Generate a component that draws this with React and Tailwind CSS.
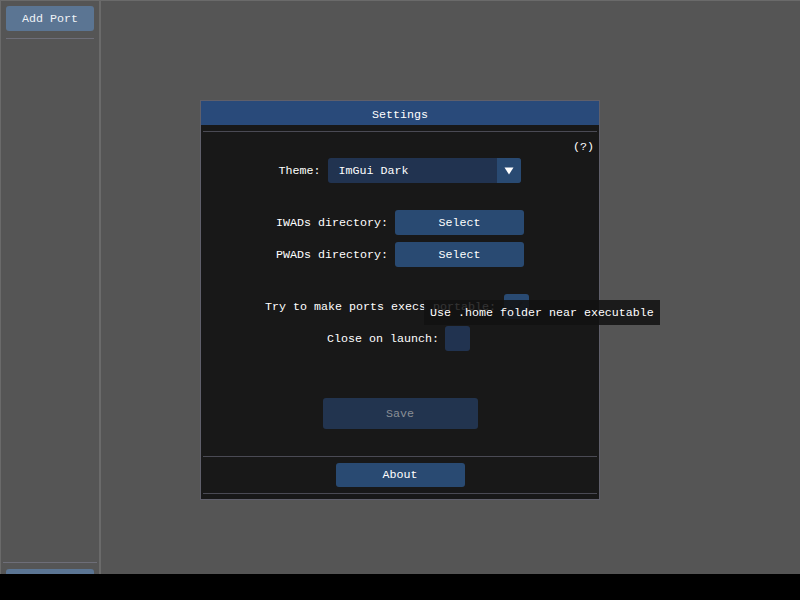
import React from "react";

function Row({ label, children, extra = "" }) {
  return (
    <div className={`flex shrink-0 items-center justify-center ${extra}`}>
      <span className="pt-[2px] leading-[13px] whitespace-pre">{label}</span>
      {children}
    </div>
  );
}

export default function App() {
  return (
    <div className="relative w-[800px] h-[600px] overflow-hidden bg-black text-white font-['Liberation_Mono','DejaVu_Sans_Mono',monospace] text-[11.67px]">
      <div className="flex h-[574px] overflow-hidden border-t border-[#6a6a6a] bg-[#555555]">
        <aside className="flex w-[101px] shrink-0 flex-col border-l border-r-2 border-[#6a6a6a]">
          <div className="mx-[5px] mt-[5px] flex h-[25px] w-[88px] shrink-0 items-center justify-center rounded-[3px] bg-[#5b7593] pt-[2px] text-[#eef2f6]">
            Add Port
          </div>
          <div className="mx-[5px] mt-[7px] h-px w-[88px] shrink-0 bg-[#6e6e78]" />
          <div className="h-[523px] shrink-0" />
          <div className="mx-[2px] h-px shrink-0 bg-[#6e6e78]" />
          <div className="mx-[5px] mt-[6px] h-[25px] w-[88px] shrink-0 rounded-[3px] bg-[#5b7593]" />
        </aside>
        <main className="flex-1" />
      </div>

      {/* Settings modal */}
      <div className="absolute left-[200px] top-[100px] flex h-[400px] w-[400px] flex-col border border-[#5f5f6a] bg-[#181818]">
        <div className="flex h-[24px] shrink-0 items-center justify-center bg-[#294a7a] pt-[5px]">
          Settings
        </div>
        <div className="mx-[2px] mt-[6px] h-px shrink-0 bg-[#4a4a54]" />
        <div className="mt-[9px] flex h-[13px] shrink-0 justify-end pr-[5px] leading-[13px]">(?)</div>

        <Row label="Theme:" extra="mt-[4px] h-[25px]">
          <div className="ml-[8px] flex h-[25px] w-[193px] overflow-hidden rounded-[3px] bg-[#213350]">
            <span className="flex flex-1 items-center pl-[10px] pt-[2px]">ImGui Dark</span>
            <span className="flex w-[24px] items-center justify-center bg-[#294a72]">
              <svg width="10" height="8" viewBox="0 0 10 8">
                <polygon points="0.5,0.5 9.5,0.5 5,7.5" fill="#ffffff" />
              </svg>
            </span>
          </div>
        </Row>

        <Row label="IWADs directory:" extra="mt-[27px] h-[25px]">
          <div className="ml-[7px] flex h-[25px] w-[129px] items-center justify-center rounded-[3px] bg-[#294a72] pt-[2px]">
            Select
          </div>
        </Row>
        <Row label="PWADs directory:" extra="mt-[7px] h-[25px]">
          <div className="ml-[7px] flex h-[25px] w-[129px] items-center justify-center rounded-[3px] bg-[#294a72] pt-[2px]">
            Select
          </div>
        </Row>

        <Row label="Try to make ports execs portable:" extra="mt-[27px] h-[25px] pr-[6px]">
          <div className="ml-[8px] flex h-[25px] w-[25px] items-center justify-center rounded-[3px] bg-[#294a72]">
            <svg width="16" height="14" viewBox="0 0 16 14">
              <polyline points="2,7 6,11 14,2" fill="none" stroke="#1d3354" strokeWidth="2.5" />
            </svg>
          </div>
        </Row>
        <Row label="Close on launch:" extra="mt-[7px] h-[25px] pr-[3px]">
          <div className="ml-[6px] h-[25px] w-[25px] rounded-[3px] bg-[#213350]" />
        </Row>

        <div className="mt-[47px] flex shrink-0 justify-center">
          <div className="flex h-[31px] w-[155px] items-center justify-center rounded-[3px] bg-[#22344f] pt-[2px] text-[#8a8f96]">
            Save
          </div>
        </div>

        <div className="mx-[2px] mt-[27px] h-px shrink-0 bg-[#4a4a54]" />
        <div className="mt-[6px] flex shrink-0 justify-center">
          <div className="flex h-[24px] w-[129px] items-center justify-center rounded-[3px] bg-[#294a72] pt-[2px]">
            About
          </div>
        </div>
        <div className="mx-[2px] mt-[6px] h-px shrink-0 bg-[#4a4a54]" />
      </div>

      {/* Tooltip */}
      <div className="absolute left-[424px] top-[300px] flex h-[25px] w-[236px] items-center bg-[rgba(18,18,18,0.86)] pl-[6px] pt-[2px] whitespace-pre">
        Use .home folder near executable
      </div>
    </div>
  );
}
